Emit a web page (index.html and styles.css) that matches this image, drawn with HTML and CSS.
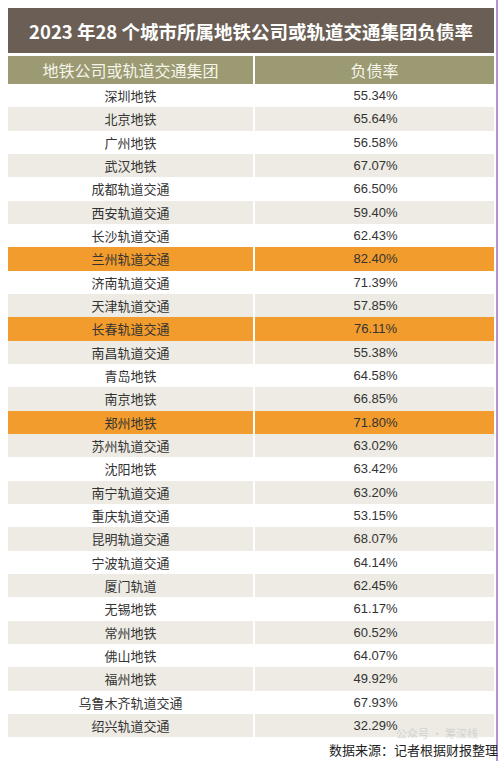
FILE: index.html
```html
<!DOCTYPE html>
<html lang="zh-CN">

<head>
    <meta charset="UTF-8">
    <meta name="viewport" content="width=device-width, initial-scale=1.0">
    <title>2023年28个城市所属地铁公司或轨道交通集团负债率</title>
    <link rel="stylesheet" href="styles.css">
</head>

<body>
    <div class="page">
        <div class="title">2023 年28 个城市所属地铁公司或轨道交通集团负债率</div>

        <div class="table">
            <div class="row head">
                <div class="cell">地铁公司或轨道交通集团</div>
                <div class="cell">负债率</div>
            </div>
            <div class="row"><div class="cell">深圳地铁</div><div class="cell num">55.34%</div></div>
            <div class="row alt"><div class="cell">北京地铁</div><div class="cell num">65.64%</div></div>
            <div class="row"><div class="cell">广州地铁</div><div class="cell num">56.58%</div></div>
            <div class="row alt"><div class="cell">武汉地铁</div><div class="cell num">67.07%</div></div>
            <div class="row"><div class="cell">成都轨道交通</div><div class="cell num">66.50%</div></div>
            <div class="row alt"><div class="cell">西安轨道交通</div><div class="cell num">59.40%</div></div>
            <div class="row"><div class="cell">长沙轨道交通</div><div class="cell num">62.43%</div></div>
            <div class="row hot"><div class="cell">兰州轨道交通</div><div class="cell num">82.40%</div></div>
            <div class="row"><div class="cell">济南轨道交通</div><div class="cell num">71.39%</div></div>
            <div class="row alt"><div class="cell">天津轨道交通</div><div class="cell num">57.85%</div></div>
            <div class="row hot"><div class="cell">长春轨道交通</div><div class="cell num">76.11%</div></div>
            <div class="row alt"><div class="cell">南昌轨道交通</div><div class="cell num">55.38%</div></div>
            <div class="row"><div class="cell">青岛地铁</div><div class="cell num">64.58%</div></div>
            <div class="row alt"><div class="cell">南京地铁</div><div class="cell num">66.85%</div></div>
            <div class="row hot"><div class="cell">郑州地铁</div><div class="cell num">71.80%</div></div>
            <div class="row alt"><div class="cell">苏州轨道交通</div><div class="cell num">63.02%</div></div>
            <div class="row"><div class="cell">沈阳地铁</div><div class="cell num">63.42%</div></div>
            <div class="row alt"><div class="cell">南宁轨道交通</div><div class="cell num">63.20%</div></div>
            <div class="row"><div class="cell">重庆轨道交通</div><div class="cell num">53.15%</div></div>
            <div class="row alt"><div class="cell">昆明轨道交通</div><div class="cell num">68.07%</div></div>
            <div class="row"><div class="cell">宁波轨道交通</div><div class="cell num">64.14%</div></div>
            <div class="row alt"><div class="cell">厦门轨道</div><div class="cell num">62.45%</div></div>
            <div class="row"><div class="cell">无锡地铁</div><div class="cell num">61.17%</div></div>
            <div class="row alt"><div class="cell">常州地铁</div><div class="cell num">60.52%</div></div>
            <div class="row"><div class="cell">佛山地铁</div><div class="cell num">64.07%</div></div>
            <div class="row alt"><div class="cell">福州地铁</div><div class="cell num">49.92%</div></div>
            <div class="row"><div class="cell">乌鲁木齐轨道交通</div><div class="cell num">67.93%</div></div>
            <div class="row alt"><div class="cell">绍兴轨道交通</div><div class="cell num">32.29%</div></div>
        </div>

        <div class="footer">
            <span class="watermark">公众号 · 筹深线</span>
            <span class="source">数据来源：记者根据财报整理</span>
        </div>
    </div>
</body>

</html>
```

FILE: styles.css
```css
body {
    margin: 0;
    padding: 0;
    background-color: #fff;
    font-family: "Liberation Sans", "Noto Sans CJK SC", sans-serif;
    color: #333;
}

.page {
    box-sizing: border-box;
    width: 498px;
    height: 761px;
    padding: 8px 2px 0 8px;
    border-right: 2px solid #b590d6;
}

/* 标题 */
.title {
    height: 45px;
    background-color: #6b5f55;
    color: #fff;
    font-family: "Noto Sans CJK SC", sans-serif;
    font-weight: 700;
    font-size: 18.5px;
    display: flex;
    align-items: center;
    justify-content: center;
    margin-bottom: 3px;
}

.table {
    display: flex;
    flex-direction: column;
}

.row {
    display: grid;
    grid-template-columns: 245px 1fr;
    column-gap: 2px;
    height: 23.33px;
    font-size: 13px;
}

.row .cell {
    display: flex;
    align-items: center;
    justify-content: center;
    font-family: "Noto Sans CJK SC", sans-serif;
}

.row .num {
    font-family: "Liberation Sans", Arial, sans-serif;
    padding-left: 2px;
}

.row.head {
    height: 28px;
    font-size: 16px;
}

.row.head .cell {
    background-color: #9b9a72;
    color: #f6f5ea;
}

.row.alt .cell {
    background-color: #edebe3;
}

.row.hot .cell {
    background-color: #f19c2c;
}

/* 数据来源 */
.footer {
    display: flex;
    justify-content: flex-end;
    font-family: "Noto Sans CJK SC", sans-serif;
    font-size: 13px;
    line-height: 15px;
    color: #222;
    margin-top: 5px;
    margin-right: -4px;
    position: relative;
}

.footer .watermark {
    position: absolute;
    right: 20px;
    top: -14px;
    color: #c4c4c4;
    opacity: 0.6;
    font-size: 11px;
    line-height: 11px;
}
```
